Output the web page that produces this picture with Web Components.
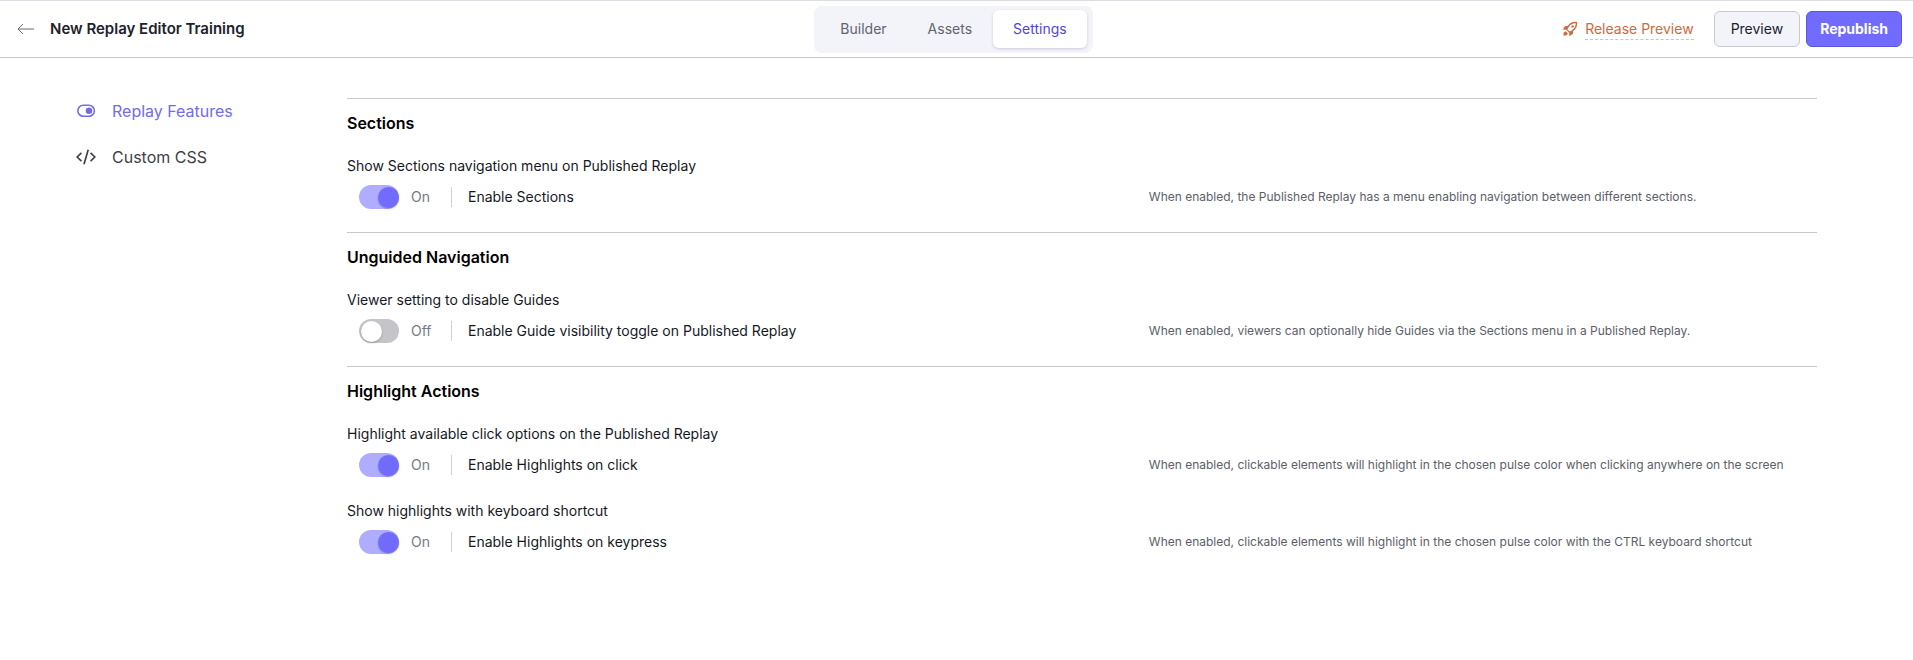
<!DOCTYPE html>
<html lang="en">
<head>
<meta charset="utf-8">
<meta name="viewport" content="width=device-width, initial-scale=1">
<title>New Replay Editor Training</title>
<style>
  body { margin: 0; background: #fff; color: #17181f; font-family: Inter, "Liberation Sans", sans-serif; font-size: 14px; line-height: 20px; }
</style>
</head>
<body>
<replay-settings></replay-settings>
<script>
class BaseElement extends HTMLElement {
  constructor() {
    super();
    this.attachShadow({ mode: 'open' });
  }
  connectedCallback() {
    if (!this.shadowRoot.firstChild) this.shadowRoot.innerHTML = this.render();
  }
}

customElements.define('tab-bar', class extends BaseElement {
  render() {
    return `<style>
      :host { display: block; }
      nav { display: flex; gap: 1px; padding: 4px 6px 5px; background: #f3f3fa; border-radius: 8px; }
      a { padding: 9px 20px; color: #62636e; font-size: 14px; line-height: 20px; text-decoration: none; border-radius: 6px; }
      a.active { background: #fff; color: #4f46d8; box-shadow: 0 1px 3px rgba(30, 30, 60, .18); }
    </style>
    <nav aria-label="Editor">
      <a href="#builder">Builder</a><a href="#assets">Assets</a><a href="#settings" class="active" aria-current="page">Settings</a>
    </nav>`;
  }
});

customElements.define('action-button', class extends BaseElement {
  render() {
    return `<style>
      :host { display: block; }
      button { box-sizing: border-box; height: 36px; padding: 0 16px; border: 1px solid #c9c9d3; border-radius: 6px; background: #f3f3fa; color: #20212b; font: 14px/20px Inter, "Liberation Sans", sans-serif; }
      :host([primary]) button { padding: 0 13px; border-color: #5b55dd; background: #716cff; color: #fff; font-weight: 700; }
    </style><button type="button"><slot></slot></button>`;
  }
});

customElements.define('app-header', class extends BaseElement {
  render() {
    return `<style>
      :host { display: block; }
      header { display: grid; grid-template-columns: 1fr auto 1fr; align-items: center; height: 56px; padding: 0 17px 0 11px; border-top: 1px solid #dcdce2; border-bottom: 1px solid #c8c8cc; }
      .left, .right { display: flex; align-items: center; }
      .right { justify-content: flex-end; gap: 6px; margin-right: -6px; }
      .left { gap: 16px; padding-left: 6px; }
      .back, .back svg { display: block; color: #6c6d75; }
      h1 { margin: 0; font-size: 15px; line-height: 24px; font-weight: 600; color: #20212b; }
      .release { display: flex; gap: 7px; margin-right: 14px; color: #cf6a3c; text-decoration: none; }
      .release span { border-bottom: 1px dashed #f0bd72; }
      .release svg { margin-top: 2px; }
    </style>
    <header>
      <div class="left">
        <a class="back" href="#back" aria-label="Back"><svg width="17" height="12" viewBox="0 0 17 12" fill="none" stroke="currentColor"><path d="M17 6H1M6 1 1 6l5 5"/></svg></a>
        <h1>New Replay Editor Training</h1>
      </div>
      <tab-bar></tab-bar>
      <div class="right">
        <a class="release" href="#release">
          <svg width="16" height="16" viewBox="0 0 16 16" fill="currentColor" aria-hidden="true"><path fill-rule="evenodd" d="M15 1c-4.200-.6-7 .8-9.200 4H3.200L.8 8.600l3.400.2 3 3 .2 3.400 3.600-2.400v-2.600C14.200 8 15.600 5.200 15 1zM13.700 2.300c.1 3-1 5.100-3.900 7.100L7.600 10.600 5.400 8.400 6.600 6.200c2-2.900 4.100-4 7.100-3.900z"/><circle cx="10.600" cy="5.400" r="1.200"/><path d="M3.600 10.200c-1.600.4-2.200 1.800-2.200 4.400 2.600 0 4-.6 4.400-2.200z"/></svg>
          <span>Release Preview</span>
        </a>
        <action-button>Preview</action-button>
        <action-button primary>Republish</action-button>
      </div>
    </header>`;
  }
});

customElements.define('side-link', class extends BaseElement {
  render() {
    return `<style>
      :host { display: block; color: #3f404a; }
      :host([active]) { color: #716ce8; }
      a { display: flex; align-items: center; gap: 16px; color: inherit; font-size: 16px; line-height: 24px; text-decoration: none; }
      ::slotted(svg) { display: block; flex: none; }
    </style><a href="#${this.getAttribute('target')}"><slot name="icon"></slot><slot></slot></a>`;
  }
});

customElements.define('toggle-switch', class extends BaseElement {
  render() {
    const on = this.hasAttribute('on');
    return `<style>
      :host { display: block; }
      label { display: flex; align-items: center; height: 24px; padding-left: 12px; color: #17181f; }
      input { appearance: none; box-sizing: border-box; width: 40px; height: 24px; margin: 0; padding: 1px 0 1px 2px; border-radius: 12px; background: #c4c4c9; display: flex; align-items: center; }
      input::before { content: ""; width: 21px; height: 21px; border-radius: 50%; background: #fff; box-shadow: 0 1px 2px rgba(0, 0, 0, .25); }
      input:checked { justify-content: flex-end; background: #b0adff; }
      input:checked::before { background: #716cff; }
      .state { box-sizing: border-box; width: 40px; margin-left: 12px; color: #777884; }
      .name { padding-left: 16px; border-left: 1px solid #d0d0d5; }
    </style>
    <label><input type="checkbox" role="switch" ${on ? 'checked' : ''}><span class="state">${on ? 'On' : 'Off'}</span><span class="name"><slot></slot></span></label>`;
  }
});

customElements.define('setting-item', class extends BaseElement {
  render() {
    return `<style>
      :host { display: block; }
      .row { display: grid; grid-template-columns: 6fr 5fr; align-items: center; margin-top: 9px; }
      p { margin: 0; color: #17181f; }
      .hint { font-size: 12px; line-height: 16px; color: #5d5e69; }
    </style>
    <p>${this.getAttribute('caption')}</p>
    <div class="row"><slot></slot><p class="hint">${this.getAttribute('hint')}</p></div>`;
  }
});

customElements.define('settings-section', class extends BaseElement {
  render() {
    return `<style>
      :host { display: block; padding: 12px 0 23px; border-top: 1px solid #c8c8cc; }
      h2 { margin: 0 0 21px; font-size: 16px; line-height: 24px; font-weight: 600; color: #000; }
      .items { display: grid; gap: 24px; }
    </style>
    <h2>${this.getAttribute('heading')}</h2>
    <div class="items"><slot></slot></div>`;
  }
});

customElements.define('replay-settings', class extends BaseElement {
  render() {
    return `<style>
      :host { display: block; }
      .page { display: grid; grid-template-columns: 271px minmax(0, 1fr); padding: 40px 96px 40px 76px; }
      nav { display: flex; flex-direction: column; gap: 22px; padding-top: 1px; }
    </style>
    <app-header></app-header>
    <div class="page">
      <nav aria-label="Settings">
        <side-link active target="features"><svg slot="icon" width="20" height="14" viewBox="0 0 20 14" fill="none" stroke="currentColor" stroke-width="1.600"><rect x="1.800" y="1.300" width="16.600" height="11" rx="5.500"/><circle cx="13" cy="6.800" r="3.300" fill="currentColor" stroke="none"/></svg>Replay Features</side-link>
        <side-link target="css"><svg slot="icon" width="20" height="16" viewBox="0 0 20 16" fill="none" stroke="currentColor" stroke-width="1.700"><path d="M5.400 3.800 1.200 8l4.200 4.200M14.600 3.800 18.800 8l-4.200 4.200M12.200.8 8 15.200"/></svg>Custom CSS</side-link>
      </nav>
      <main>
        <settings-section heading="Sections">
          <setting-item caption="Show Sections navigation menu on Published Replay" hint="When enabled, the Published Replay has a menu enabling navigation between different sections."><toggle-switch on>Enable Sections</toggle-switch></setting-item>
        </settings-section>
        <settings-section heading="Unguided Navigation">
          <setting-item caption="Viewer setting to disable Guides" hint="When enabled, viewers can optionally hide Guides via the Sections menu in a Published Replay."><toggle-switch>Enable Guide visibility toggle on Published Replay</toggle-switch></setting-item>
        </settings-section>
        <settings-section heading="Highlight Actions">
          <setting-item caption="Highlight available click options on the Published Replay" hint="When enabled, clickable elements will highlight in the chosen pulse color when clicking anywhere on the screen"><toggle-switch on>Enable Highlights on click</toggle-switch></setting-item>
          <setting-item caption="Show highlights with keyboard shortcut" hint="When enabled, clickable elements will highlight in the chosen pulse color with the CTRL keyboard shortcut"><toggle-switch on>Enable Highlights on keypress</toggle-switch></setting-item>
        </settings-section>
      </main>
    </div>`;
  }
});
</script>
</body>
</html>
